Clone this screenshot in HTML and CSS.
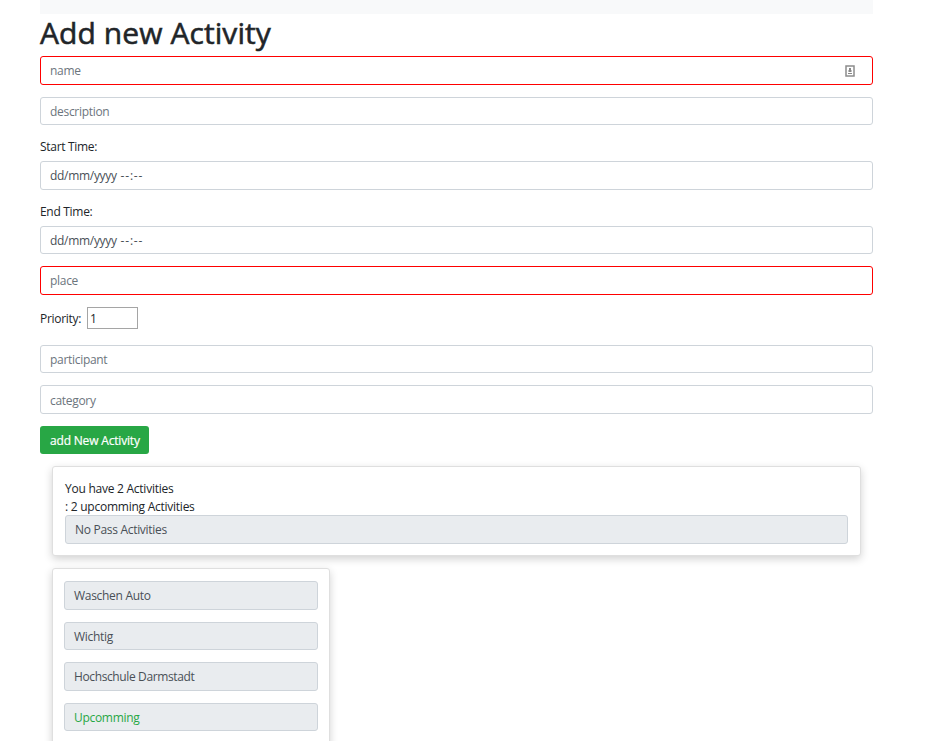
FILE: index.html
```html
<!DOCTYPE html>
<html lang="en">
<head>
<meta charset="utf-8">
<title>Activities</title>
<link rel="stylesheet" href="styles.css">
</head>
<body>
<main class="container">
  <div class="navbar"></div>
  <h1 class="title">Add new Activity</h1>
  <form>
    <div class="control invalid has-icon">name
      <svg class="autofill" width="10" height="12" viewBox="0 0 10 12"><rect x="1" y="1" width="8" height="10" fill="#fff" stroke="#8c8c8c" stroke-width="1.5"/><path d="M4 3h2v2H4zM3.5 5h3v2h-3zM3 8h4v1H3z" fill="#888"/></svg>
    </div>
    <div class="control">description</div>
    <label class="label">Start Time:</label>
    <div class="control date">dd/mm/yyyy <span class="time">--:--</span></div>
    <label class="label">End Time:</label>
    <div class="control date">dd/mm/yyyy <span class="time">--:--</span></div>
    <div class="control invalid">place</div>
    <div class="priority"><label class="priority-label">Priority:</label><div class="number">1</div></div>
    <div class="control">participant</div>
    <div class="control category">category</div>
    <button class="btn" type="button">add New Activity</button>
  </form>
  <section class="card summary">
    <div class="line">You have 2 Activities</div>
    <div class="line">: 2 upcomming Activities</div>
    <div class="control readonly">No Pass Activities</div>
  </section>
  <section class="card activity">
    <div class="control readonly">Waschen Auto</div>
    <div class="control readonly">Wichtig</div>
    <div class="control readonly place">Hochschule Darmstadt</div>
    <div class="control readonly success">Upcomming</div>
  </section>
</main>
</body>
</html>
```
FILE: styles.css
```css
* { box-sizing: border-box; }
html { height: 741px; overflow: hidden; }
body {
  margin: 0;
  background: #fff;
  color: #212529;
  font: 12px/18px "Segoe UI", "Open Sans", "Noto Sans", sans-serif;
  letter-spacing: -0.3px;
}
.container { width: 833px; height: 741px; margin-left: 40px; }
.navbar { height: 14px; background: #f8f9fa; }
.title {
  height: 36.4px;
  margin: 0 0 6px;
  font-size: 30px;
  line-height: 37px;
  font-weight: 500;
  letter-spacing: 0.08px;
  -webkit-text-stroke: 0.55px #212529;
}
.control {
  height: 28.5px;
  margin-bottom: 12px;
  padding: 4.7px 9px 4.3px;
  border: 1px solid #ced4da;
  border-radius: 3px;
  color: #6c757d;
  white-space: nowrap;
}
.category { padding-top: 5.5px; }
.invalid { border-color: #f00; }
.has-icon { display: flex; justify-content: space-between; align-items: center; padding-right: 17px; }
.autofill { flex: none; }
.date { color: #495057; }
.time { margin-left: 1px; letter-spacing: 0.8px; }
.label { display: block; height: 18px; margin-bottom: 6px; line-height: 20px; }
.priority { display: flex; height: 38px; }
.priority-label { width: 47px; padding-top: 3px; }
.number { width: 51px; height: 22px; padding: 2px 2px 0; border: 1px solid #a5a5a5; color: #212529; }
.btn {
  display: block;
  width: 109px;
  height: 28.5px;
  padding: 2px 0 0 10px;
  margin-bottom: 12px;
  border: 0;
  border-radius: 3px;
  background: #28a745;
  color: #fff;
  font: inherit;
  letter-spacing: -0.18px;
  -webkit-text-stroke: 0.2px #fff;
  text-align: left;
  white-space: nowrap;
}
.card {
  margin: 0 12px 12px;
  border: 1px solid #dfdfdf;
  border-radius: 3px;
  background: #fff;
  box-shadow: 0 3px 9px rgba(0, 0, 0, .18);
}
.summary { height: 90px; padding: 12px; }
.line { height: 18px; line-height: 20px; letter-spacing: -0.25px; }
.activity { width: 278px; padding: 12px 11px; }
.readonly { background: #e9ecef; color: #495057; }
.place { letter-spacing: -0.38px; }
.success { color: #28a745; }
```
